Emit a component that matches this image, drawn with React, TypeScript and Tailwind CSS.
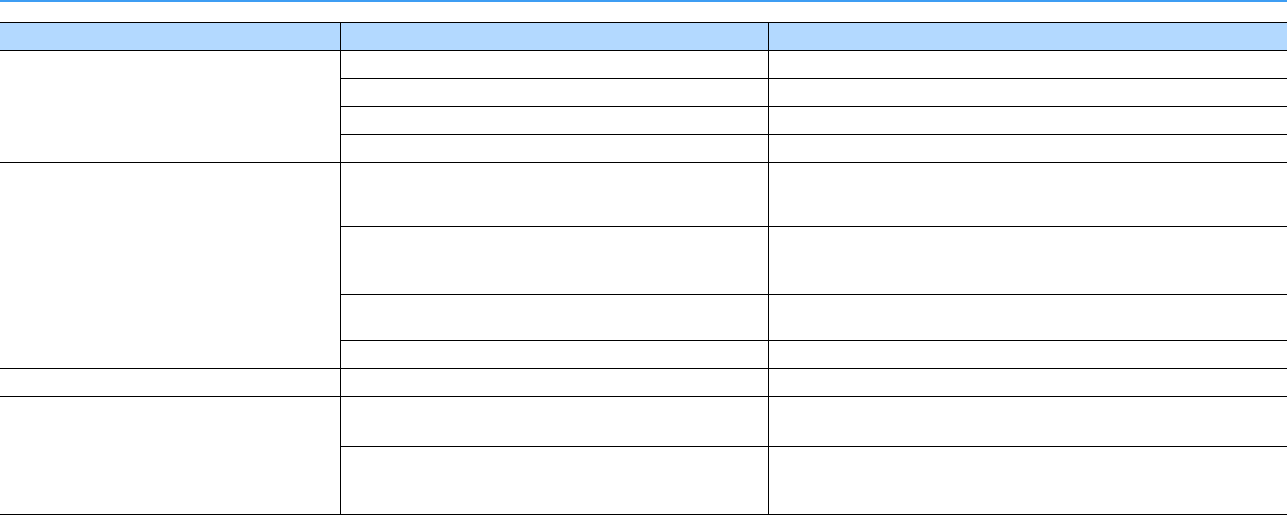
import React from "react";

type Row = { h: number; lead?: number };

// body rows: height (line to line) and rowspan of the first column where a group starts
const rows: Row[] = [
  { h: 28, lead: 4 },
  { h: 28 },
  { h: 28 },
  { h: 28 },
  { h: 64, lead: 4 },
  { h: 68 },
  { h: 46 },
  { h: 28 },
  { h: 28, lead: 1 },
  { h: 50, lead: 2 },
  { h: 68 },
];

const heights: Record<number, string> = {
  28: "h-[28px]",
  46: "h-[46px]",
  50: "h-[50px]",
  64: "h-[64px]",
  68: "h-[68px]",
};

const cell = "border border-black p-0";

const App = () => {
  return (
    <div className="min-h-screen bg-white font-['Liberation_Sans',sans-serif]">
      {/* Top accent bar */}
      <div className="h-[2px] bg-[#3d9df3]"></div>

      <table className="mt-[20px] w-full table-fixed border-collapse">
        <colgroup>
          <col className="w-[340px]" />
          <col className="w-[428px]" />
          <col />
        </colgroup>
        <thead>
          <tr className="h-[28px] bg-[#b3d9ff]">
            <th className={`${cell} border-l-0`}></th>
            <th className={cell}></th>
            <th className={`${cell} border-r-0`}></th>
          </tr>
        </thead>
        <tbody>
          {rows.map((r, i) => (
            <tr key={i} className={heights[r.h]}>
              {r.lead && <td rowSpan={r.lead} className={`${cell} border-l-0`}></td>}
              <td className={cell}></td>
              <td className={`${cell} border-r-0`}></td>
            </tr>
          ))}
        </tbody>
      </table>
    </div>
  );
};

export default App;
